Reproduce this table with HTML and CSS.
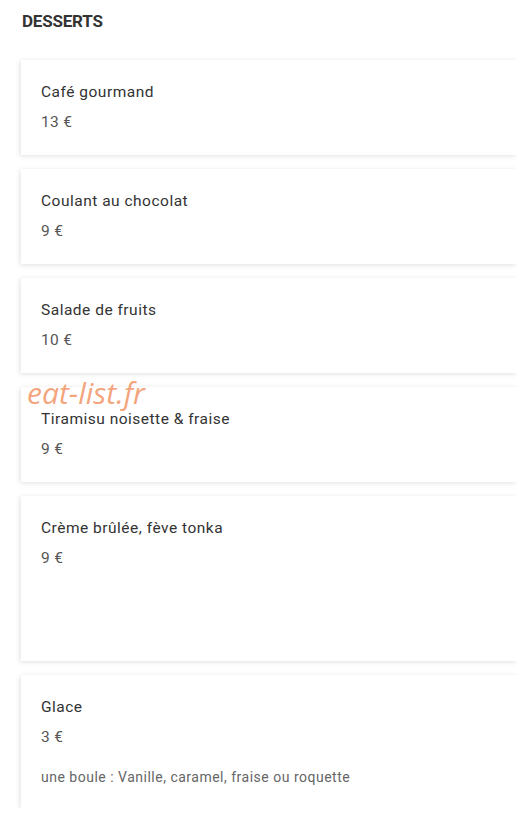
FILE: index.html
```html
<!DOCTYPE html>
<html lang="fr">
<head>
<meta charset="utf-8">
<link rel="stylesheet" href="styles.css">
</head>
<body>
<main class="menu">
  <h2 class="section-title">DESSERTS</h2>
  <div class="items">
    <div class="item">
      <div class="name">Café gourmand</div>
      <div class="price">13 €</div>
    </div>
    <div class="item">
      <div class="name">Coulant au chocolat</div>
      <div class="price">9 €</div>
    </div>
    <div class="item">
      <div class="name">Salade de fruits</div>
      <div class="price">10 €</div>
    </div>
    <div class="item">
      <div class="name">Tiramisu noisette &amp; fraise</div>
      <div class="price">9 €</div>
      <span class="watermark">eat-list.fr</span>
    </div>
    <div class="item item-tall">
      <div class="name">Crème brûlée, fève tonka</div>
      <div class="price">9 €</div>
    </div>
    <div class="item">
      <div class="name">Glace</div>
      <div class="price">3 €</div>
      <div class="desc">une boule : Vanille, caramel, fraise ou roquette</div>
    </div>
  </div>
</main>
</body>
</html>
```
FILE: styles.css
```css
html, body {
  margin: 0;
  padding: 0;
  background: #ffffff;
  overflow: hidden;
}
body {
  font-family: Roboto, "Liberation Sans", sans-serif;
  color: #333333;
}
.menu {
  padding: 9px 0 0 21px;
}
.section-title {
  margin: 0 0 27px 1px;
  font-size: 17px;
  line-height: 24px;
  font-weight: 700;
  color: #333333;
  letter-spacing: -0.2px;
}
.items {
  display: flex;
  flex-direction: column;
  gap: 14px;
}
.item {
  position: relative;
  background: #ffffff;
  box-shadow: -1px 1px 5px rgba(0, 0, 0, 0.12);
  padding: 20px 20px 21px 20px;
}
.item-tall {
  min-height: 124px;
}
.name {
  font-size: 15.5px;
  line-height: 24px;
  color: #333333;
  letter-spacing: 0.5px;
}
.price {
  margin-top: 6px;
  font-size: 15.5px;
  line-height: 24px;
  color: #555555;
  letter-spacing: 0.3px;
}
.desc {
  margin-top: 18px;
  font-size: 14px;
  line-height: 20px;
  color: #666666;
  letter-spacing: 0.5px;
}
.watermark {
  position: absolute;
  left: 6px;
  top: -14px;
  font-family: "Open Sans", sans-serif;
  font-style: italic;
  font-size: 30px;
  color: rgba(240, 140, 90, 0.8);
  line-height: 40px;
  letter-spacing: 0;
}
```
